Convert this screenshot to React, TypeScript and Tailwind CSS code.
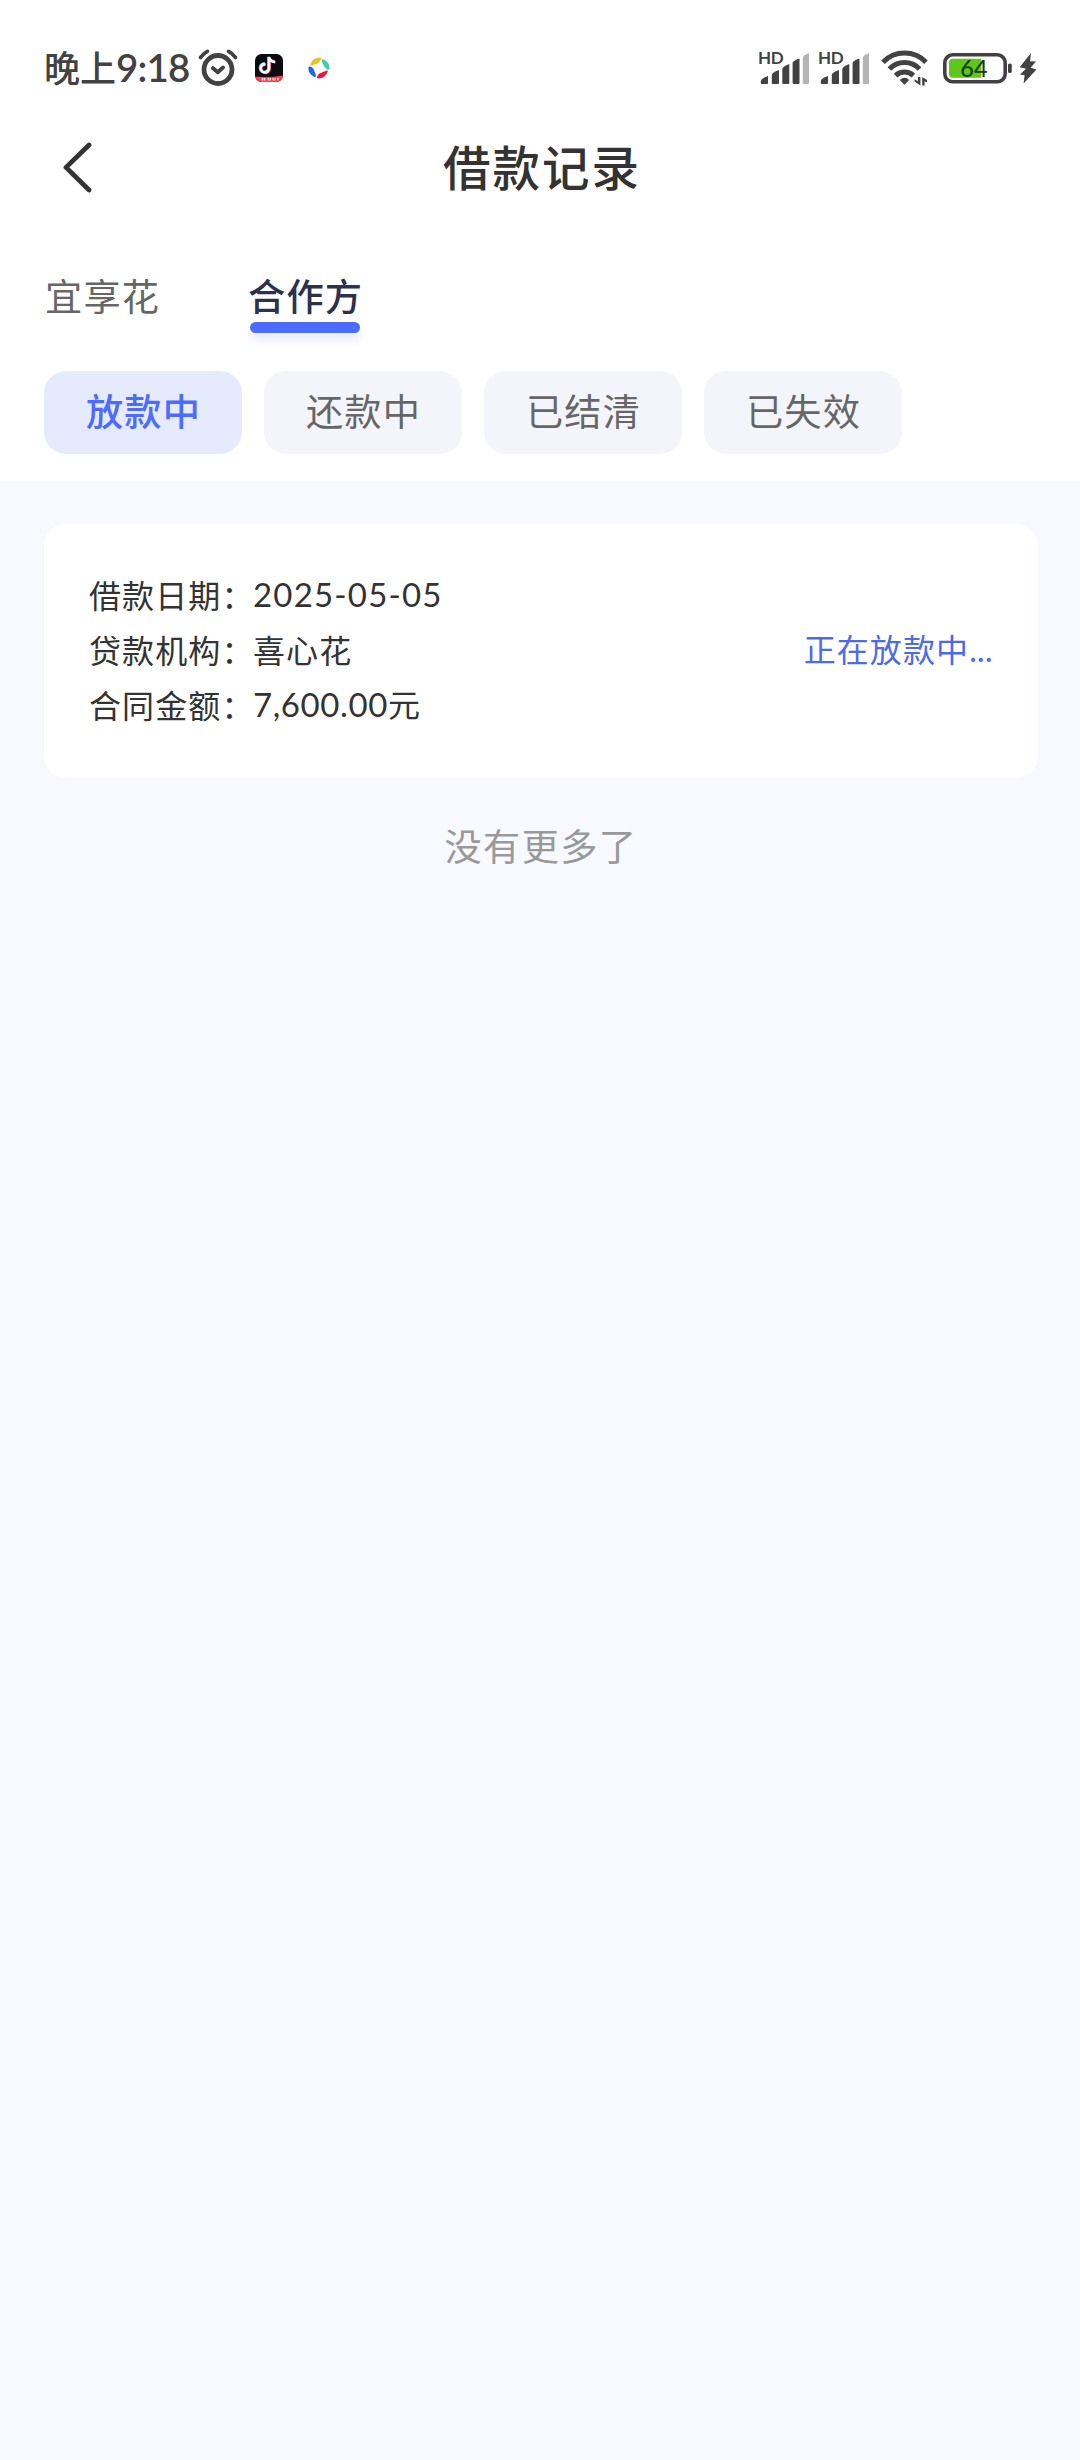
import React from "react";

function AlarmIcon() {
  return (
    <svg className="ml-[8px] h-[38px] w-[40px]" viewBox="0 0 40 38" fill="none" stroke="#424242" strokeLinecap="round" strokeLinejoin="round">
      <circle cx="20" cy="20.5" r="14" strokeWidth="4.8" />
      <path d="M2.6 8.4 Q5.5 4.4 9.4 2.4M37.4 8.4 Q34.5 4.4 30.6 2.4" strokeWidth="3.8" />
      <path d="M15 19.2 L19.8 23.2 L25 18.6" strokeWidth="4" />
    </svg>
  );
}

function VideoAppIcon() {
  return (
    <svg className="ml-[17px] h-7 w-7" viewBox="0 0 28 28">
      <defs>
        <clipPath id="app-shape">
          <rect width="28" height="28" rx="6.5" />
        </clipPath>
      </defs>
      <g clipPath="url(#app-shape)">
        <rect width="28" height="28" fill="#0b0a10" />
        <g fill="none" strokeWidth="2.6">
          <path d="M13.4 2.8 V13.8 A4.2 4.2 0 1 1 9.6 9.6 M13.4 2.8 Q14.2 7 19.2 7.4" stroke="#36e4e0" />
          <path d="M14.8 3.8 V14.8 A4.2 4.2 0 1 1 11 10.6 M14.8 3.8 Q15.6 8 20.6 8.4" stroke="#f0305c" />
          <path d="M14.1 3.2 V14.3 A4.2 4.2 0 1 1 10.3 10.1 M14.1 3.2 Q14.9 7.5 19.9 7.9" stroke="#fff" />
        </g>
        <path d="M0 22.6 Q14 24 28 21.4 V28 H0Z" fill="#f5404c" />
        <path d="M6.5 25.3H11M12.5 25.3H16M17.5 25.3H20.5M22 25H24" stroke="#ffd9da" strokeWidth="2.6" strokeDasharray="1.6 .5" />
      </g>
    </svg>
  );
}

function PinwheelIcon() {
  return (
    <svg className="ml-[25px] h-[22px] w-[22px]" viewBox="0 0 22 22">
      <path d="M2.4 7 Q4.6 .6 12.4 .4 Q13.8 .6 13 2.4 Q11.4 6 6.4 7.4 Q4.6 8.2 3.2 8.6 Q2 8.4 2.4 7Z" fill="#f2c114" />
      <path d="M15 2.2 Q21.6 4.6 21.6 11.4 Q21 13.4 19.2 12.4 Q16 10.8 15 7 Q13.8 4.6 13.6 3.2 Q13.8 2 15 2.2Z" fill="#3ccfa4" />
      <path d="M19.8 14.6 Q17.6 21.4 10 21.6 Q8.2 21.2 9.2 19.4 Q10.8 16 15 15 Q17 14 18.8 13.4 Q20.2 13.4 19.8 14.6Z" fill="#f5123f" />
      <path d="M1.4 9.6 Q4.6 9.8 6 13.2 Q7.6 16.6 8 18.8 Q7.8 20.6 6 19.8 Q.2 16.8 .4 10.8 Q.6 9.6 1.4 9.6Z" fill="#1768f5" />
    </svg>
  );
}

function SignalIcon() {
  return (
    <div className="relative mr-[8px] h-9 w-[52px]">
      <span className="absolute -left-px top-0 whitespace-nowrap font-['Lato'] text-[17px] font-bold leading-[16px] tracking-[-0.3px] text-[#424242]">HD</span>
      <svg className="h-9 w-[52px]" viewBox="0 0 52 36">
        <g fill="#424242">
          <path d="M1.8 33V31Q2 28.6 9 26V33Q9 34 8 34H2.8Q1.8 34 1.8 33Z" />
          <path d="M12.8 33V25Q13 22.4 20 20V33Q20 34 19 34H13.8Q12.8 34 12.8 33Z" />
          <path d="M23.3 33V19Q23.6 16.4 30.3 14V33Q30.3 34 29.3 34H24.3Q23.3 34 23.3 33Z" />
          <path d="M33.6 33V13Q34 10.4 40.5 8.4V33Q40.5 34 39.5 34H34.6Q33.6 34 33.6 33Z" />
        </g>
        <path d="M43.8 33V8Q44 5 50 3.2V33Q50 34 49 34H44.8Q43.8 34 43.8 33Z" fill="#b5b5b5" />
      </svg>
    </div>
  );
}

function WifiIcon() {
  return (
    <svg className="ml-[2px] h-9 w-[48px]" viewBox="0 0 48 36">
      <g fill="none" stroke="#424242" strokeWidth="5">
        <path d="M2 12.2 A30 30 0 0 1 45 12.2" />
        <path d="M8.4 19 A21 21 0 0 1 38.6 19" />
        <path d="M14.6 25.6 A13 13 0 0 1 32.4 25.6" />
      </g>
      <path d="M18.8 30 Q23.5 25.4 28.2 30 L23.9 34.4 Q23.5 34.8 23.1 34.4Z" fill="#424242" />
      <path d="M37 27H39.4V35.4L33.6 31.4V29.2L37 31.2ZM43.6 35.6H41.2V27L46 30V32.4L43.6 31.2Z" fill="#424242" />
    </svg>
  );
}

function BatteryIcon() {
  return (
    <svg className="ml-[14px] h-9 w-[70px]" viewBox="0 0 70 36">
      <rect x="1.8" y="4.8" width="60.4" height="27" rx="8" fill="#fff" stroke="#424044" strokeWidth="3.6" />
      <path d="M10 8.8H38.4V27.8H10Q6 27.8 6 23.8V12.8Q6 8.8 10 8.8Z" fill="#5dc71c" />
      <text x="31" y="26.8" textAnchor="middle" fontFamily="Lato" fontWeight="500" fontSize="23.5" fill="#163d06">64</text>
      <rect x="65" y="13.6" width="3.8" height="9.4" rx="1.6" fill="#424044" />
    </svg>
  );
}

function BoltIcon() {
  return (
    <svg className="ml-[6px] h-9 w-[18px]" viewBox="0 0 18 36">
      <path d="M12 3 L.6 17.2 L7 18.8 L1 24.6 L5.6 25.2 L4.6 33.4 L17.4 19.6 L11.6 17.8 L17 11.6 L11 11.2Z" fill="#424242" />
    </svg>
  );
}

function StatusBar() {
  return (
    <div className="flex h-[136px] items-center pl-[44px] pr-[43px]">
      <div className="flex items-center whitespace-nowrap text-[36px] font-medium leading-none text-[#424242]">
        <span className="pb-[5px]">晚上</span>
        <span className="pb-[2px] font-['Lato'] text-[38.5px] font-semibold tracking-[-0.8px]">9:18</span>
      </div>
      <AlarmIcon />
      <VideoAppIcon />
      <PinwheelIcon />
      <div className="ml-auto flex items-center">
        <SignalIcon />
        <SignalIcon />
        <WifiIcon />
        <BatteryIcon />
        <BoltIcon />
      </div>
    </div>
  );
}

function Header() {
  return (
    <header className="grid h-[64px] grid-cols-[1fr_auto_1fr] items-center pl-[62px] pr-[58px]">
      <svg className="h-[52px] w-[32px]" viewBox="0 0 32 52" fill="none" stroke="#333" strokeWidth="4.8" strokeLinecap="round" strokeLinejoin="round">
        <path d="M27 3 L4 25.4 L27 48" />
      </svg>
      <h1 className="pb-[5px] text-[47.5px] font-medium leading-none tracking-[2px] text-[#333]">借款记录</h1>
    </header>
  );
}

function Tabs() {
  return (
    <nav className="mt-[68px] flex gap-[90px] whitespace-nowrap pl-[45px] text-[37.2px] leading-[54px] tracking-[1.2px]">
      <span className="w-[113px] text-[#666]">宜享花</span>
      <span className="flex w-[115px] flex-col font-medium text-[#2d3150]">
        合作方
        <span className="ml-[2px] h-[11px] w-[110px] rounded-full bg-[#4d6bfe] shadow-[0_7px_8px_#4d6bfe24]" />
      </span>
    </nav>
  );
}

function Filters() {
  const items = ["放款中", "还款中", "已结清", "已失效"];
  return (
    <div className="mt-[38px] flex gap-[22px] whitespace-nowrap pb-[27px] pl-[44px] text-[37.2px] leading-none tracking-[1.2px]">
      {items.map((label, i) => (
        <button
          key={label}
          className={
            i === 0
              ? "flex h-[83px] w-[198px] items-center justify-center rounded-[22px] bg-[#e5eaff] pb-[3px] pl-px font-medium text-[#4d6bfe]"
              : "flex h-[83px] w-[198px] items-center justify-center rounded-[22px] bg-[#f4f5fa] pb-[3px] pl-px text-[#666]"
          }
        >
          {label}
        </button>
      ))}
    </div>
  );
}

function Row({ label, children }: { label: string; children: React.ReactNode }) {
  return (
    <div className="flex h-[55px] items-center whitespace-nowrap">
      <span className="w-[164px]">{label}：</span>
      <span>{children}</span>
    </div>
  );
}

function LoanCard() {
  return (
    <section className="ml-[44px] mr-[42px] mt-[43px] flex h-[254px] items-center justify-between rounded-[22px] bg-white pb-[4px] pl-[45px] pr-[45px] text-[32px] leading-none tracking-[1.1px] text-[#333]">
      <div>
        <Row label="借款日期">
          <span className="font-['Lato'] text-[33px] tracking-[1.2px]">2025-05-05</span>
        </Row>
        <Row label="贷款机构">喜心花</Row>
        <Row label="合同金额">
          <span className="font-['Lato'] text-[33px] tracking-[0.6px]">7,600.00</span>元
        </Row>
      </div>
      <span className="whitespace-nowrap text-[#4d6be6]">
        正在放款中<span className="font-['Lato'] tracking-[0.4px]">...</span>
      </span>
    </section>
  );
}

export default function App() {
  return (
    <main className="min-h-[2460px] w-[1080px] bg-[#f8f9ff] font-['Noto_Sans_CJK_SC',sans-serif]">
      <div className="bg-white">
        <StatusBar />
        <Header />
        <Tabs />
        <Filters />
      </div>
      <LoanCard />
      <p className="mt-[48px] pl-[2px] text-center text-[37.2px] leading-[38px] tracking-[1.4px] text-[#999]">没有更多了</p>
    </main>
  );
}
